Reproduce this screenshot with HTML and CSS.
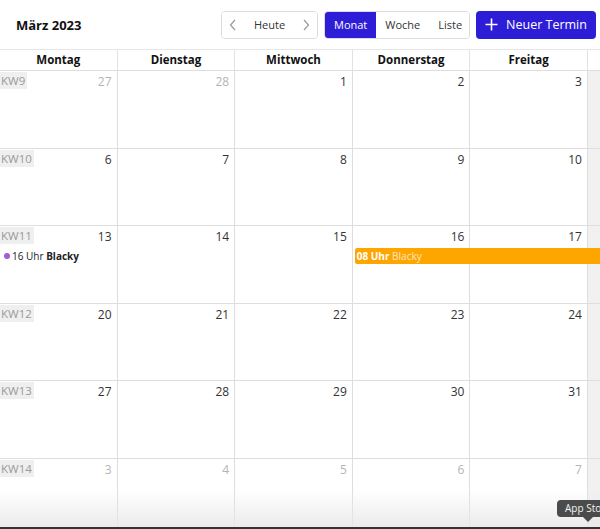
FILE: index.html
```html
<!DOCTYPE html>
<html lang="de">
<head>
    <meta charset="UTF-8">
    <title>Kalender</title>
    <link rel="stylesheet" href="styles.css">
</head>
<body>
    <div class="toolbar">
        <h1 class="title">März 2023</h1>
        <div class="controls">
            <div class="btn-group nav-group">
                <button class="btn chev">
                    <svg width="8" height="12" viewBox="0 0 8 12"><path d="M6 1 L1.5 6 L6 11" fill="none" stroke="#9a9a9a" stroke-width="1.2"/></svg>
                </button>
                <button class="btn">Heute</button>
                <button class="btn chev">
                    <svg width="8" height="12" viewBox="0 0 8 12"><path d="M2 1 L6.5 6 L2 11" fill="none" stroke="#9a9a9a" stroke-width="1.2"/></svg>
                </button>
            </div>
            <div class="btn-group view-group">
                <button class="btn active">Monat</button>
                <button class="btn">Woche</button>
                <button class="btn">Liste</button>
            </div>
            <button class="new-btn">
                <svg width="13" height="13" viewBox="0 0 13 13"><path d="M6.5 0.5 V12.5 M0.5 6.5 H12.5" stroke="#fff" stroke-width="1.6"/></svg>
                Neuer Termin
            </button>
        </div>
    </div>

    <!-- only Mo-Fr fit, the weekend is a sliver on the right -->
    <div class="calendar">
        <div class="head-row">
            <div class="head-cell">Montag</div>
            <div class="head-cell">Dienstag</div>
            <div class="head-cell">Mittwoch</div>
            <div class="head-cell">Donnerstag</div>
            <div class="head-cell">Freitag</div>
            <div class="head-cell"></div>
        </div>
        <div id="weeks"></div>
    </div>

    <div class="screen-fade"></div>
    <div class="tooltip">App Store</div>

    <script>
        const weeks = document.getElementById('weeks')
        const starts = [
            { kw: 9, days: [27, 28, 1, 2, 3], other: [0, 1] },
            { kw: 10, days: [6, 7, 8, 9, 10], other: [] },
            { kw: 11, days: [13, 14, 15, 16, 17], other: [] },
            { kw: 12, days: [20, 21, 22, 23, 24], other: [] },
            { kw: 13, days: [27, 28, 29, 30, 31], other: [] },
            { kw: 14, days: [3, 4, 5, 6, 7], other: [0, 1, 2, 3, 4] }
        ]
        for (let w = 0; w < starts.length; w++) {
            const s = starts[w]
            let html = ''
            for (let d = 0; d < 5; d++) {
                const cls = 'day' + (s.other.includes(d) ? ' other' : '')
                html += `<div class="${cls}" style="grid-column:${d + 1}">
                    ${d == 0 ? `<span class="kw">KW${s.kw}</span>` : ''}
                    <span class="num">${s.days[d]}</span>
                </div>`
            }
            html += `<div class="day weekend" style="grid-column:6"></div>`
            if (s.kw == 11) {
                html += `<div class="event-dot"><span class="dot"></span>16 Uhr <b>Blacky</b></div>`
                html += `<div class="event-bar"><b>08 Uhr</b> <span>Blacky</span></div>`
            }
            weeks.innerHTML += `<div class="week">${html}</div>`
        }
    </script>
</body>
</html>
```

FILE: styles.css
```css
body {
    margin: 0;
    width: 600px;
    height: 529px;
    overflow: hidden;
    font-family: "Open Sans", "DejaVu Sans", sans-serif;
    color: #222;
    background: #fff;
    position: relative;
}

/* Toolbar */
.toolbar {
    height: 49px;
    display: flex;
    align-items: center;
    justify-content: space-between;
    padding: 0 4px 0 16px;
}

.title {
    margin: 0;
    font-size: 13px;
    font-weight: 700;
    color: #111;
}

.controls {
    display: flex;
    align-items: center;
    gap: 6px;
}

.btn-group {
    display: flex;
    height: 28px;
    border: 1px solid #dcdcdc;
    border-radius: 4px;
    box-sizing: border-box;
    overflow: hidden;
}

.btn {
    border: none;
    background: #fff;
    font-family: inherit;
    font-size: 11px;
    color: #333;
    padding: 0 9px;
    cursor: pointer;
}

.nav-group {
    width: 97px;
    margin-left: 1px;
}

.nav-group .btn {
    padding: 0 7px;
}

.nav-group .btn:nth-child(2) {
    flex: 1;
}

.chev {
    display: flex;
    align-items: center;
}

.view-group {
    width: 146px;
}

.view-group .btn {
    flex: 1;
}

.view-group .btn.active {
    background: #2d1dd6;
    color: #fff;
    flex: 0 0 50px;
}

.new-btn {
    height: 28px;
    width: 120px;
    display: flex;
    align-items: center;
    justify-content: center;
    gap: 8px;
    border: none;
    border-radius: 4px;
    background: #2d1dd6;
    color: #fff;
    font-family: inherit;
    font-size: 12.5px;
    font-weight: 500;
}

/* Calendar grid */
.calendar {
    width: 600px;
}

.head-row {
    display: grid;
    grid-template-columns: repeat(5, 117.6px) 1fr;
    border-top: 1px solid #e6e6e6;
    border-bottom: 1px solid #dedede;
}

.head-cell {
    height: 20px;
    line-height: 20px;
    text-align: center;
    font-size: 11.5px;
    font-weight: 700;
    color: #111;
    border-right: 1px solid #e2e2e2;
}

.head-cell:last-child {
    border-right: none;
}

.week {
    display: grid;
    grid-template-columns: repeat(5, 117.6px) 1fr;
    grid-template-rows: 22px 16px 1fr;
    height: 77.6px;
    box-sizing: border-box;
    border-bottom: 1px solid #dedede;
}

.day {
    grid-row: 1 / 4;
    border-right: 1px solid #dedede;
    display: flex;
    justify-content: space-between;
    align-items: flex-start;
}

.day.weekend {
    background: #f1f1f1;
    border-right: none;
}

.kw {
    background: #efefef;
    color: #9a9a9a;
    font-size: 11.5px;
    line-height: 17px;
    padding: 0 2px 0 1px;
    margin-top: 1px;
}

.num {
    margin-left: auto;
    padding: 2px 5px 0 0;
    font-size: 12px;
    color: #333;
}

.day.other .num {
    color: #b4b4b4;
}

.event-dot {
    grid-row: 2;
    grid-column: 1;
    z-index: 1;
    font-size: 10px;
    line-height: 16px;
    padding-left: 4px;
    color: #222;
    white-space: nowrap;
}

.dot {
    display: inline-block;
    width: 6px;
    height: 6px;
    border-radius: 50%;
    background: #a45bd6;
    margin-right: 2px;
    vertical-align: 1px;
}

.event-bar {
    grid-row: 2;
    grid-column: 4 / 7;
    z-index: 1;
    margin-left: 2px;
    background: #ffa500;
    border-radius: 2px 0 0 2px;
    color: #fff;
    font-size: 10px;
    line-height: 16px;
    padding-left: 2px;
}

.event-bar span {
    color: #fde7c0;
}

/* bottom of the screen */
.screen-fade {
    position: absolute;
    left: 0;
    right: 0;
    bottom: 0;
    height: 40px;
    background: linear-gradient(rgba(255,255,255,0), rgba(232,232,232,0.85) 95%, #333 95%);
    pointer-events: none;
}

.tooltip {
    position: absolute;
    left: 557px;
    top: 500px;
    background: #4b4b4b;
    color: #f2f2f2;
    font-size: 10px;
    line-height: 17px;
    padding: 0 8px;
    border-radius: 4px;
    white-space: nowrap;
}

.tooltip::after {
    content: "";
    position: absolute;
    left: 26px;
    bottom: -5px;
    border-left: 5px solid transparent;
    border-right: 5px solid transparent;
    border-top: 5px solid #4b4b4b;
}
```
